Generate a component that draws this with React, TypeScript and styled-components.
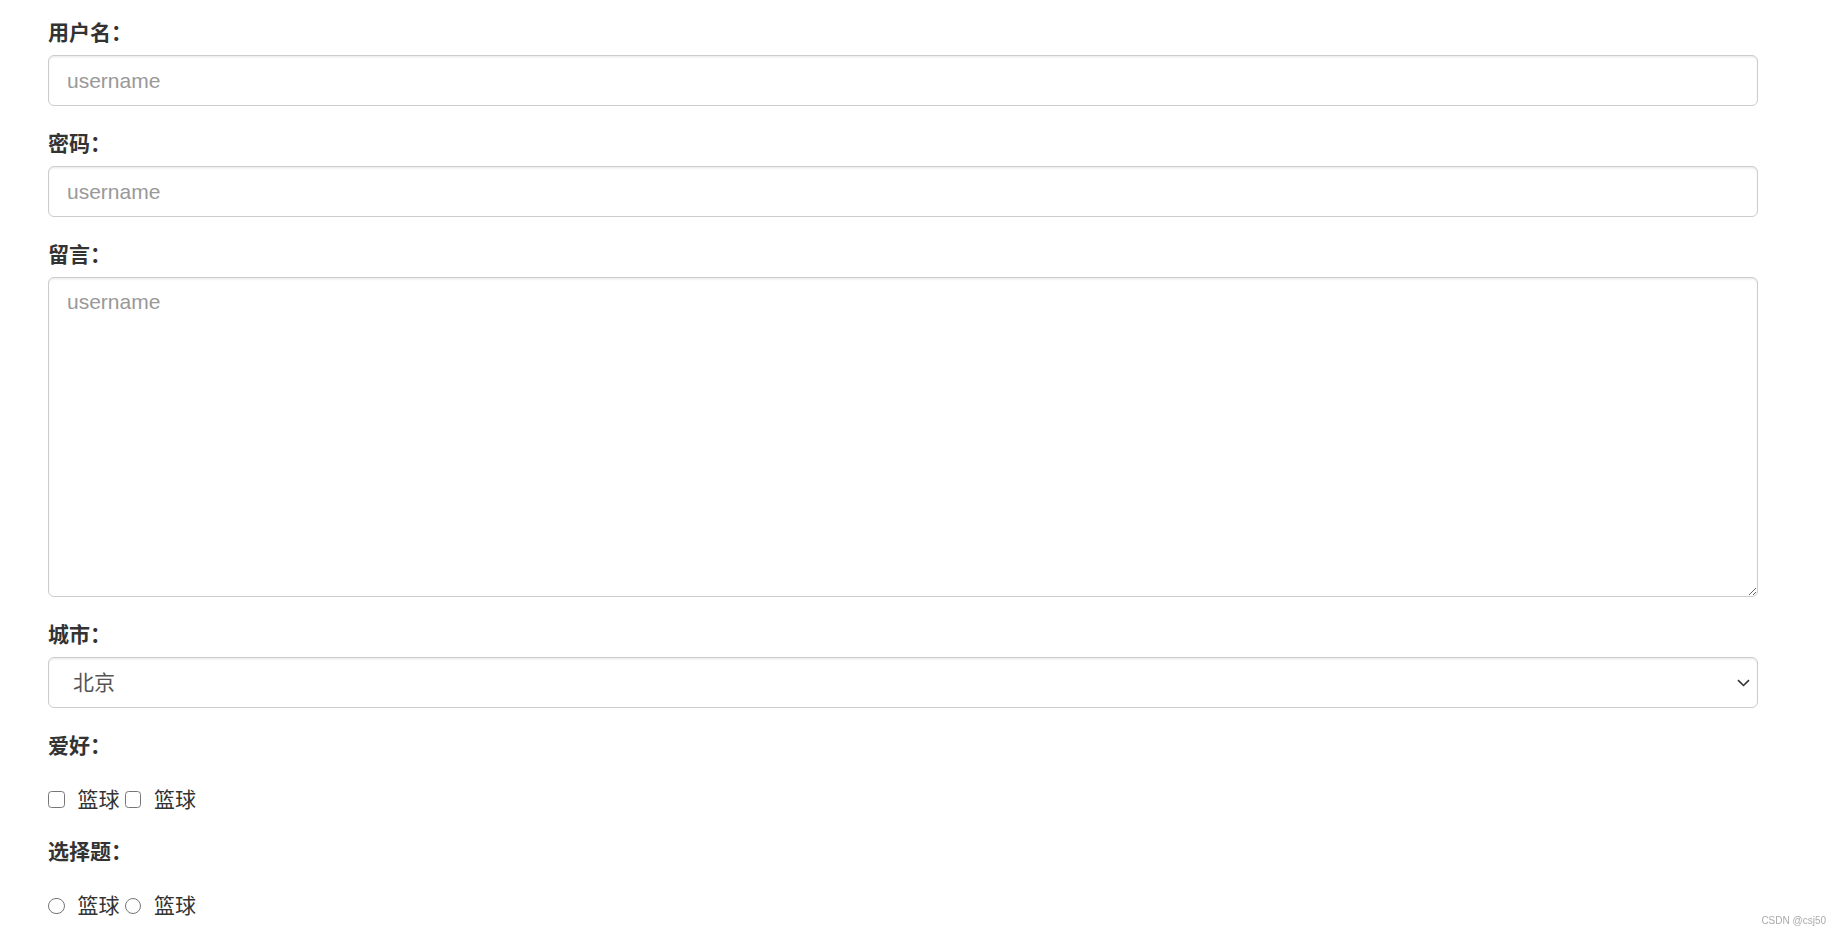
import React from 'react'
import styled, { createGlobalStyle } from 'styled-components'

const GlobalStyle = createGlobalStyle`
  html, body {
    margin: 0;
    padding: 0;
    background: #fff;
  }
  body {
    font-family: "Liberation Sans", "Noto Sans CJK SC", sans-serif;
    color: #333;
    overflow: hidden;
  }
`

const Page = styled.div`
  width: 1710px;
  padding: 17.5px 0 0 48px;
`

const Form = styled.form`
  display: flex;
  flex-direction: column;
`

const Group = styled.div`
  margin-bottom: 22.5px;

  &:last-child {
    margin-bottom: 0;
  }
`

const Label = styled.label`
  display: block;
  font-family: "Liberation Sans", "Noto Sans CJK SC", sans-serif;
  font-size: 21px;
  font-weight: 700;
  line-height: 30px;
  color: #333;
  margin-bottom: 7.5px;
`

const fieldCss = `
  display: block;
  width: 100%;
  box-sizing: border-box;
  padding: 9px 18px;
  font-family: "Liberation Sans", "Noto Sans CJK SC", sans-serif;
  font-size: 21px;
  line-height: 30px;
  color: #555;
  background: #fff;
  border: 1px solid #ccc;
  border-radius: 6px;
  box-shadow: inset 0 1.5px 1.5px rgba(0, 0, 0, 0.075);
  outline: none;
  margin: 0;

  &::placeholder {
    color: #999;
  }
`

const TextInput = styled.input`
  ${fieldCss}
  height: 51px;
`

const TextArea = styled.textarea`
  ${fieldCss}
  height: 320px;
  resize: vertical;
`

const SelectWrap = styled.div`
  position: relative;
`

const Select = styled.select`
  ${fieldCss}
  height: 51px;
  padding-left: 24px;
  appearance: none;
  -webkit-appearance: none;
`

const Chevron = styled.svg`
  position: absolute;
  right: 8px;
  top: 50%;
  width: 13px;
  height: 8px;
  margin-top: -4px;
  pointer-events: none;
`

// label margin collapses into this one, so it carries the whole gap
const OptionRow = styled.div`
  display: flex;
  align-items: center;
  height: 30px;
  margin-top: 24px;
`

const Option = styled.label`
  display: inline-flex;
  align-items: center;
  font-family: "Liberation Sans", "Noto Sans CJK SC", sans-serif;
  font-size: 21px;
  line-height: 30px;
  color: #333;
  margin-right: 5px;
`

const Box = styled.input<{ $round?: boolean }>`
  appearance: none;
  -webkit-appearance: none;
  box-sizing: border-box;
  width: 16.5px;
  height: 16.5px;
  margin: 0 13px 0 0;
  border: 1.5px solid #767676;
  border-radius: ${p => (p.$round ? '50%' : '3.5px')};
  background: #fff;
  flex: none;
`

const Watermark = styled.div`
  position: fixed;
  right: 16px;
  bottom: 9.5px;
  font-family: "Liberation Sans", sans-serif;
  font-size: 10px;
  line-height: 12px;
  color: #aaa;
`

const App = () => (
  <Page>
    <GlobalStyle />
    <Form>
      <Group>
        <Label>用户名：</Label>
        <TextInput type="text" placeholder="username" />
      </Group>
      <Group>
        <Label>密码：</Label>
        <TextInput type="password" placeholder="username" />
      </Group>
      <Group>
        <Label>留言：</Label>
        <TextArea placeholder="username" rows={10} />
      </Group>
      <Group>
        <Label>城市：</Label>
        <SelectWrap>
          <Select defaultValue="bj">
            <option value="bj">北京</option>
            <option value="sh">上海</option>
          </Select>
          <Chevron viewBox="0 0 13 8">
            <path
              d="M1 1.2 L6.5 6.5 L12 1.2"
              fill="none"
              stroke="#333"
              strokeWidth="1.6"
            />
          </Chevron>
        </SelectWrap>
      </Group>
      <Group>
        <Label>爱好：</Label>
        <OptionRow>
          <Option>
            <Box type="checkbox" />
            篮球
          </Option>
          <Option>
            <Box type="checkbox" />
            篮球
          </Option>
        </OptionRow>
      </Group>
      <Group>
        <Label>选择题：</Label>
        <OptionRow>
          <Option>
            <Box type="radio" name="q" $round />
            篮球
          </Option>
          <Option>
            <Box type="radio" name="q" $round />
            篮球
          </Option>
        </OptionRow>
      </Group>
    </Form>
    <Watermark>CSDN @csj50</Watermark>
  </Page>
)

export default App
